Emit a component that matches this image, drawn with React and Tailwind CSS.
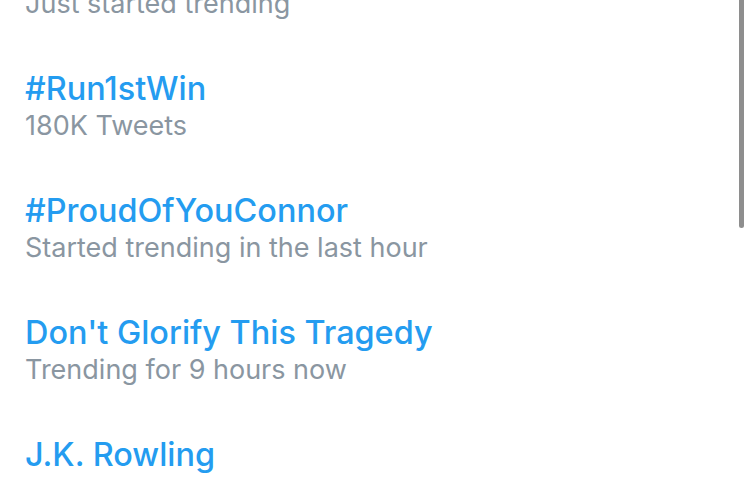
import React from 'react';

const trends = [
  { name: '#Run1stWin', meta: '180K Tweets' },
  { name: '#ProudOfYouConnor', meta: 'Started trending in the last hour' },
  { name: "Don't Glorify This Tragedy", meta: 'Trending for 9 hours now' },
  { name: 'J.K. Rowling' },
];

const App = () => {
  return (
    <div
      className="relative h-[478px] w-full overflow-hidden bg-white"
      style={{ fontFamily: 'Inter, "Noto Sans", sans-serif' }}
    >
      <div className="px-[25px]">
        {/* tail of the trend above the fold */}
        <div className="-mt-[12px] pb-[25px] text-[27px] leading-[32px] text-[#8a96a1]">
          Just started trending
        </div>

        {trends.map((t) => (
          <div key={t.name} className="pt-[26px] pb-[25px]">
            <div className="text-[32.4px] leading-[36px] font-medium text-[#249cf0]">{t.name}</div>
            {t.meta && (
              <div className="mt-[3px] text-[27px] leading-[32px] text-[#8a96a1]">{t.meta}</div>
            )}
          </div>
        ))}
      </div>

      {/* scroll indicator */}
      <div className="absolute right-[5px] top-0 h-[228px] w-[5px] rounded-b-full bg-[#8e8e8e]" />
    </div>
  );
};

export default App;
